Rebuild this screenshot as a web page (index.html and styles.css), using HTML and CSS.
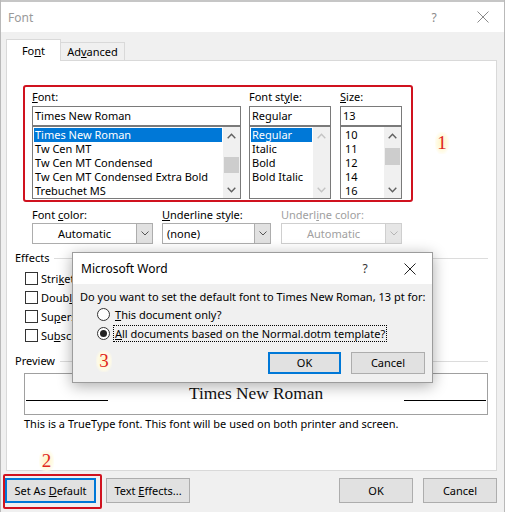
FILE: index.html
```html
<!DOCTYPE html>
<html>
<head>
<meta charset="utf-8">
<title>Font</title>
<link rel="stylesheet" href="styles.css">
</head>
<body>
<div class="window">
  <div class="topstrip"></div>
  <div class="titlebar">
    <span class="title">Font</span>
    <span class="tb-btns">
      <span class="help">?</span>
      <svg class="close" width="12" height="12" viewBox="0 0 12 12"><path d="M0.5 0.5L11.5 11.5M11.5 0.5L0.5 11.5" stroke="#8a8a8a" stroke-width="1" fill="none"/></svg>
    </span>
  </div>
  <div class="client">
    <div class="tabs">
      <div class="tab active">Fo<u>n</u>t</div>
      <div class="tab inactive">Ad<u>v</u>anced</div>
    </div>
    <div class="panel">
      <div class="font-section">
        <div class="col col-font">
          <div class="label"><u>F</u>ont:</div>
          <div class="input">Times New Roman</div>
          <div class="list">
            <div class="items">
              <div class="item sel">Times New Roman</div>
              <div class="item">Tw Cen MT</div>
              <div class="item">Tw Cen MT Condensed</div>
              <div class="item">Tw Cen MT Condensed Extra Bold</div>
              <div class="item">Trebuchet MS</div>
            </div>
            <div class="scroll">
              <div class="arrow"><svg width="9" height="6" viewBox="0 0 9 6"><polyline points="0.7,5.2 4.5,1.2 8.3,5.2" fill="none" stroke="#606060" stroke-width="1.4"/></svg></div>
              <div class="thumb thumb-font"></div>
              <div class="arrow bottom"><svg width="9" height="6" viewBox="0 0 9 6"><polyline points="0.7,0.8 4.5,4.8 8.3,0.8" fill="none" stroke="#606060" stroke-width="1.4"/></svg></div>
            </div>
          </div>
        </div>
        <div class="col col-style">
          <div class="label">Font st<u>y</u>le:</div>
          <div class="input">Regular</div>
          <div class="list">
            <div class="items">
              <div class="item sel">Regular</div>
              <div class="item">Italic</div>
              <div class="item">Bold</div>
              <div class="item">Bold Italic</div>
            </div>
            <div class="scroll">
              <div class="arrow"><svg width="9" height="6" viewBox="0 0 9 6"><polyline points="0.7,5.2 4.5,1.2 8.3,5.2" fill="none" stroke="#c4c4c4" stroke-width="1.4"/></svg></div>
              <div class="arrow bottom"><svg width="9" height="6" viewBox="0 0 9 6"><polyline points="0.7,0.8 4.5,4.8 8.3,0.8" fill="none" stroke="#c4c4c4" stroke-width="1.4"/></svg></div>
            </div>
          </div>
        </div>
        <div class="col col-size">
          <div class="label"><u>S</u>ize:</div>
          <div class="input">13</div>
          <div class="list">
            <div class="items">
              <div class="item num">10</div>
              <div class="item num">11</div>
              <div class="item num">12</div>
              <div class="item num">14</div>
              <div class="item num">16</div>
            </div>
            <div class="scroll">
              <div class="arrow"><svg width="9" height="6" viewBox="0 0 9 6"><polyline points="0.7,5.2 4.5,1.2 8.3,5.2" fill="none" stroke="#606060" stroke-width="1.4"/></svg></div>
              <div class="thumb thumb-size"></div>
              <div class="arrow bottom"><svg width="9" height="6" viewBox="0 0 9 6"><polyline points="0.7,0.8 4.5,4.8 8.3,0.8" fill="none" stroke="#606060" stroke-width="1.4"/></svg></div>
            </div>
          </div>
        </div>
      </div>

      <div class="row2">
        <div class="field f-color">
          <div class="label2">Font <u>c</u>olor:</div>
          <div class="combo">
            <div class="combo-text center">Automatic</div>
            <div class="combo-btn"><svg width="8" height="5" viewBox="0 0 8 5"><polyline points="0.5,0.5 4,4 7.5,0.5" fill="none" stroke="#555" stroke-width="1"/></svg></div>
          </div>
        </div>
        <div class="field f-ustyle">
          <div class="label2"><u>U</u>nderline style:</div>
          <div class="combo">
            <div class="combo-text">(none)</div>
            <div class="combo-btn"><svg width="8" height="5" viewBox="0 0 8 5"><polyline points="0.5,0.5 4,4 7.5,0.5" fill="none" stroke="#555" stroke-width="1"/></svg></div>
          </div>
        </div>
        <div class="field f-ucolor disabled">
          <div class="label2">Underl<u>i</u>ne color:</div>
          <div class="combo">
            <div class="combo-text center">Automatic</div>
            <div class="combo-btn"><svg width="8" height="5" viewBox="0 0 8 5"><polyline points="0.5,0.5 4,4 7.5,0.5" fill="none" stroke="#b5b5b5" stroke-width="1"/></svg></div>
          </div>
        </div>
      </div>

      <div class="group-title g-effects"><span>Effects</span><span class="rule"></span></div>
      <div class="checks">
        <div class="check"><span class="box"></span><span>Stri<u>k</u>ethrough</span></div>
        <div class="check"><span class="box"></span><span>Doub<u>l</u>e strikethrough</span></div>
        <div class="check"><span class="box"></span><span>Su<u>p</u>erscript</span></div>
        <div class="check"><span class="box"></span><span>Su<u>b</u>script</span></div>
      </div>

      <div class="group-title g-preview"><span>Preview</span><span class="rule"></span></div>
      <div class="preview">
        <span class="pline"></span>
        <span class="ptext">Times New Roman</span>
        <span class="pline"></span>
      </div>
      <div class="info">This is a TrueType font. This font will be used on both printer and screen.</div>
    </div>

    <div class="buttons">
      <div class="btn focus b-default">Set As <u>D</u>efault</div>
      <div class="btn b-effects">Text <u>E</u>ffects...</div>
      <div class="btn b-ok">OK</div>
      <div class="btn b-cancel">Cancel</div>
    </div>
  </div>

  <div class="modal">
    <div class="mtitle">
      <span>Microsoft Word</span>
      <span class="mtb-btns">
        <span class="mhelp">?</span>
        <svg width="12" height="12" viewBox="0 0 12 12"><path d="M0.5 0.5L11.5 11.5M11.5 0.5L0.5 11.5" stroke="#222" stroke-width="1" fill="none"/></svg>
      </span>
    </div>
    <div class="mbody">
      <div class="mtext">Do you want to set the default font to Times New Roman, 13 pt for:</div>
      <div class="radio"><span class="rb"></span><span class="rlabel"><u>T</u>his document only?</span></div>
      <div class="radio"><span class="rb on"></span><span class="rlabel focused"><u>A</u>ll documents based on the Normal.dotm template?</span></div>
      <div class="mbuttons">
        <div class="btn focus m-ok">OK</div>
        <div class="btn m-cancel">Cancel</div>
      </div>
    </div>
  </div>

  <div class="ann ann1">1</div>
  <div class="ann ann2">2</div>
  <div class="ann ann3">3</div>
  <div class="redbox2"></div>
</div>
</body>
</html>
```

FILE: styles.css
```css
* { box-sizing: border-box; }
html, body { margin: 0; padding: 0; }
body {
  width: 505px;
  height: 512px;
  overflow: hidden;
  background: #f0f0f0;
  font-family: "Noto Sans", "Open Sans", sans-serif;
  font-size: 11px;
  color: #000;
}
u { text-decoration: underline; text-underline-offset: 1px; text-decoration-thickness: 1px; }

.window {
  position: relative;
  width: 505px;
  height: 512px;
  border-left: 1px solid #b9b9b9;
  border-right: 1px solid #b9b9b9;
  background: #f0f0f0;
}
.topstrip { height: 2px; background: #c6c6c6; }
.titlebar {
  height: 30px;
  background: #fff;
  display: flex;
  align-items: center;
  justify-content: space-between;
  padding-left: 7px;
  color: #9a9a9a;
  font-size: 12px;
}
.tb-btns { display: flex; align-items: center; margin-right: 15px; }
.help { width: 10px; text-align: center; margin-right: 38px; color: #8a8a8a; font-size: 12px; }
.close { display: block; }

.client { padding: 7px 7px 0 5px; }
.tabs { display: flex; align-items: flex-end; height: 21px; }
.tab { text-align: center; }
.tab.active {
  position: relative;
  z-index: 1;
  width: 55px;
  height: 22px;
  margin-bottom: -1px;
  background: #fff;
  border: 1px solid #d9d9d9;
  border-bottom: none;
  line-height: 22px;
}
.tab.inactive {
  width: 64px;
  height: 18px;
  background: #f0f0f0;
  border: 1px solid #d9d9d9;
  border-left: none;
  border-bottom: none;
  line-height: 18px;
}

.panel {
  height: 411px;
  background: #fff;
  border: 1px solid #d9d9d9;
  padding: 0 8px;
}

.font-section {
  margin: 24px 0 0 8px;
  width: 390px;
  height: 117px;
  border: 2px solid #d0121f;
  border-radius: 3px;
  padding: 2px 0 1px 7px;
  display: flex;
}
.col { display: flex; flex-direction: column; }
.col-font { width: 209px; }
.col-style { width: 82px; margin-left: 8px; }
.col-size { width: 62px; margin-left: 9px; }
.label { height: 17px; line-height: 16px; }
.input {
  height: 20px;
  border: 1px solid #7a7a7a;
  padding-left: 2px;
  line-height: 18px;
  white-space: nowrap;
}
.list {
  height: 73px;
  border: 1px solid #7a7a7a;
  display: flex;
}
.items { flex: 1; padding: 1px 1px 0 1px; overflow: hidden; }
.item { height: 14px; line-height: 14px; padding-left: 1px; white-space: nowrap; }
.item.num { padding-left: 3px; }
.item.sel { background: #0078d7; color: #fff; }
.scroll {
  width: 17px;
  background: #f0f0f0;
  display: flex;
  flex-direction: column;
}
.arrow { height: 17px; display: flex; align-items: center; justify-content: center; }
.arrow svg { display: block; }
.arrow.bottom { margin-top: auto; }
.thumb { margin: 0 1px; background: #cdcdcd; }
.thumb-font { margin-top: 13px; height: 16px; }
.thumb-size { margin-top: 4px; height: 17px; }

.row2 { display: flex; margin: 5px 0 0 17px; }
.field { display: flex; flex-direction: column; }
.f-color { width: 121px; }
.f-ustyle { width: 109px; margin-left: 9px; }
.f-ucolor { width: 121px; margin-left: 10px; }
.label2 { height: 16px; line-height: 15px; white-space: nowrap; }
.combo {
  height: 21px;
  border: 1px solid #adadad;
  background: #fff;
  display: flex;
}
.combo-text { flex: 1; line-height: 19px; padding-left: 4px; white-space: nowrap; }
.combo-text.center { text-align: center; padding-left: 0; }
.combo-btn {
  width: 16px;
  background: #e1e1e1;
  border-left: 1px solid #adadad;
  display: flex;
  align-items: center;
  justify-content: center;
}
.combo-btn svg { display: block; }
.disabled .label2 { color: #a0a0a0; }
.disabled .combo { border-color: #cfcfcf; }
.disabled .combo-text { color: #a0a0a0; }
.disabled .combo-btn { background: #e6e6e6; border-left-color: #cfcfcf; }

.group-title { display: flex; align-items: center; height: 16px; line-height: 16px; }
.group-title .rule { flex: 1; height: 1px; background: #dcdcdc; margin-left: 5px; }
.g-effects { margin-top: 6px; }
.g-preview { margin-top: 8px; }

.checks { margin: 3px 0 0 10px; }
.check { height: 19px; display: flex; align-items: center; white-space: nowrap; }
.box { flex: none; width: 13px; height: 13px; border: 1px solid #333; background: #fff; margin-right: 3px; }

.preview {
  margin: 4px 0 0 9px;
  width: 464px;
  height: 42px;
  border: 1px solid #a0a0a0;
  display: flex;
  align-items: flex-start;
  justify-content: space-between;
  padding: 0 1px;
}
.pline { width: 82px; height: 1px; background: #000; margin-top: 26px; }
.ptext {
  font-family: "Liberation Serif", "Times New Roman", serif;
  font-size: 17.33px;
  line-height: 20px;
  margin-top: 10px;
  color: #111;
}
.info { margin: 1px 0 0 9px; height: 16px; line-height: 16px; white-space: nowrap; }

.buttons { display: flex; margin: 7px 0 0 -1px; height: 25px; }
.btn {
  height: 25px;
  border: 1px solid #adadad;
  background: #e1e1e1;
  text-align: center;
  line-height: 23px;
  white-space: nowrap;
}
.btn.focus { border-color: #0078d7; box-shadow: inset 0 0 0 1px #0078d7; }
.b-default { width: 91px; }
.b-effects { width: 84px; margin-left: 10px; }
.b-ok { width: 74px; margin-left: auto; }
.b-cancel { width: 74px; margin-left: 10px; }

.modal {
  position: absolute;
  left: 71px;
  top: 252px;
  width: 361px;
  height: 131px;
  border: 1px solid #9c9c9c;
  background: #f0f0f0;
  box-shadow: 0 3px 14px rgba(0, 0, 0, 0.33);
  z-index: 5;
}
.mtitle {
  height: 31px;
  background: #fff;
  display: flex;
  align-items: center;
  justify-content: space-between;
  padding-left: 8px;
  font-size: 12px;
}
.mtb-btns { display: flex; align-items: center; margin-right: 16px; }
.mhelp { width: 10px; text-align: center; margin-right: 34px; color: #333; }
.mtb-btns svg { display: block; }
.mbody { padding: 5px 7px 0 7px; }
.mtext { height: 16px; line-height: 16px; white-space: nowrap; }
.radio { height: 19px; display: flex; align-items: center; margin-left: 17px; }
.rb {
  width: 13px;
  height: 13px;
  border: 1px solid #333;
  border-radius: 50%;
  background: #fff;
  margin-right: 3px;
  display: flex;
  align-items: center;
  justify-content: center;
}
.rb.on::after {
  content: "";
  width: 7px;
  height: 7px;
  border-radius: 50%;
  background: #222;
}
.rlabel { padding: 0 1px; border: 1px dotted transparent; line-height: 15px; white-space: nowrap; }
.rlabel.focused { border-color: #000; }
.mbuttons { display: flex; justify-content: flex-end; margin-top: 9px; }
.m-ok { width: 73px; height: 22px; line-height: 20px; }
.m-cancel { width: 74px; height: 22px; line-height: 20px; margin-left: 10px; }

.ann {
  position: absolute;
  z-index: 6;
  color: #e0261c;
  font-family: "Liberation Serif", serif;
  font-size: 19px;
  line-height: 21px;
  text-align: center;
  background: radial-gradient(ellipse at center, #fff4c4 0%, #fffbe6 55%, rgba(255,255,255,0) 80%);
}
.ann1 { left: 434px; top: 132px; width: 14px; height: 22px; }
.ann2 { left: 38px; top: 450px; width: 15px; height: 22px; }
.ann3 { left: 95px; top: 350px; width: 16px; height: 22px; }
.redbox2 {
  position: absolute;
  z-index: 6;
  left: 2px;
  top: 474px;
  width: 99px;
  height: 35px;
  border: 2px solid #d0121f;
  border-radius: 2px;
}
```
